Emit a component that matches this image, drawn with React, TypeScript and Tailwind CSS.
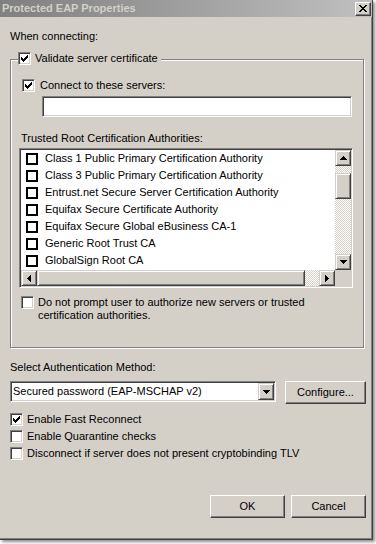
import React from 'react';

const raised =
  'border border-t-white border-l-white border-r-[#404040] border-b-[#404040] shadow-[inset_-1px_-1px_0_#808080] bg-[#d4d0c8]';
const scrollBtn =
  'border border-t-[#d4d0c8] border-l-[#d4d0c8] border-r-[#404040] border-b-[#404040] shadow-[inset_1px_1px_0_#fff,inset_-1px_-1px_0_#808080] bg-[#d4d0c8] flex items-center justify-center shrink-0';
const sunken =
  'border border-t-[#808080] border-l-[#808080] border-r-white border-b-white shadow-[inset_1px_1px_0_#404040,inset_-1px_-1px_0_#d4d0c8] bg-white';
const dither = 'bg-[repeating-conic-gradient(#fff_0_25%,#d4d0c8_0_50%)] bg-[length:2px_2px]';

const CHECK = ['......x', '.....xx', 'x...xxx', 'xx.xxx.', 'xxxxx..', '.xxx...', '..x....'];
const CLOSE = ['xx....xx', '.xx..xx.', '..xxxx..', '...xx...', '..xxxx..', '.xx..xx.', 'xx....xx'];
const UP = ['...x...', '..xxx..', '.xxxxx.', 'xxxxxxx'];
const DOWN = ['xxxxxxx', '.xxxxx.', '..xxx..', '...x...'];
const LEFT = ['...x', '..xx', '.xxx', 'xxxx', '.xxx', '..xx', '...x'];
const RIGHT = ['x...', 'xx..', 'xxx.', 'xxxx', 'xxx.', 'xx..', 'x...'];

function Pix({ rows }: { rows: string[] }) {
  const h = rows.length;
  const w = rows[0].length;
  return (
    <svg width={w} height={h} viewBox={`0 0 ${w} ${h}`} shapeRendering="crispEdges" className="block">
      {rows.flatMap((r, y) =>
        [...r].map((c, x) => (c === 'x' ? <rect key={`${x}-${y}`} x={x} y={y} width={1} height={1} fill="#000" /> : null))
      )}
    </svg>
  );
}

function CheckBox({ checked = false }: { checked?: boolean }) {
  return (
    <div className={`${sunken} w-[13px] h-[13px] shrink-0 flex items-center justify-center`}>
      {checked && <Pix rows={CHECK} />}
    </div>
  );
}

function CheckRow({ label, checked }: { label: string; checked?: boolean }) {
  return (
    <div className="flex items-center h-[13px] gap-[4px]">
      <CheckBox checked={checked} />
      <span className="leading-[13px] whitespace-nowrap">{label}</span>
    </div>
  );
}

const AUTHORITIES = [
  'Class 1 Public Primary Certification Authority',
  'Class 3 Public Primary Certification Authority',
  'Entrust.net Secure Server Certification Authority',
  'Equifax Secure Certificate Authority',
  'Equifax Secure Global eBusiness CA-1',
  'Generic Root Trust CA',
  'GlobalSign Root CA',
];

function AuthorityList() {
  return (
    <div className={`${sunken} ml-[8px] w-[334px] h-[140px] p-[1px] flex flex-col`}>
      <div className="flex h-[120px]">
        <div className="flex-1 flex flex-col overflow-hidden">
          {AUTHORITIES.map((a) => (
            <div key={a} className="h-[17px] shrink-0 flex items-center pl-[5px] gap-[7px]">
              <div className="w-[12px] h-[12px] border-2 border-black bg-white shrink-0" />
              <span className="leading-[13px] whitespace-nowrap">{a}</span>
            </div>
          ))}
        </div>
        <div className="w-[16px] flex flex-col">
          <div className={`${scrollBtn} h-[16px]`}>
            <Pix rows={UP} />
          </div>
          <div className={`${dither} h-[7px]`} />
          <div className={`${scrollBtn} h-[26px]`} />
          <div className={`${dither} flex-1`} />
          <div className={`${scrollBtn} h-[16px]`}>
            <Pix rows={DOWN} />
          </div>
        </div>
      </div>
      <div className="flex h-[16px]">
        <div className={`${scrollBtn} w-[16px]`}>
          <Pix rows={LEFT} />
        </div>
        <div className={`${scrollBtn} w-[268px]`} />
        <div className={`${dither} flex-1`} />
        <div className={`${scrollBtn} w-[16px]`}>
          <Pix rows={RIGHT} />
        </div>
        <div className="w-[16px] bg-[#d4d0c8]" />
      </div>
    </div>
  );
}

export default function App() {
  return (
    <div className="w-[376px] h-[544px] bg-white overflow-hidden font-['Liberation_Sans',Arial,sans-serif] text-[11px] text-black">
      <div className="w-[373px] h-[540px] bg-[#d4d0c8] border-r border-b border-[#404040] shadow-[inset_-1px_-1px_0_#808080,2px_2px_3px_rgba(0,0,0,0.45)] flex flex-col">
        <div className="h-[17px] shrink-0 bg-linear-to-r from-[#808080] to-[#c0c0c0] flex items-center pl-[2px] pr-[1px]">
          <span className="font-bold text-[#d4d0c8] leading-[13px] whitespace-nowrap">Protected EAP Properties</span>
          <div className={`${raised} ml-auto w-[16px] h-[14px] flex items-center justify-center`}>
            <Pix rows={CLOSE} />
          </div>
        </div>

        <div className="flex flex-col pl-[10px]">
          <div className="mt-[13px] leading-[13px]">When connecting:</div>

          <div className="relative mt-[16px] w-[354px] h-[289px] border border-[#808080] shadow-[inset_1px_1px_0_#fff,1px_1px_0_#fff] flex flex-col">
            <div className="absolute left-[7px] top-[-8px] bg-[#d4d0c8] pr-[3px]">
              <CheckRow label="Validate server certificate" checked />
            </div>

            <div className="mt-[19px] ml-[11px] flex items-center h-[13px] gap-[5px]">
              <CheckBox checked />
              <span className="leading-[13px]">Connect to these servers:</span>
            </div>
            <div className={`${sunken} mt-[4px] ml-[31px] w-[310px] h-[21px]`} />

            <div className="mt-[15px] ml-[10px] leading-[13px]">Trusted Root Certification Authorities:</div>
            <div className="mt-[3px]">
              <AuthorityList />
            </div>

            <div className="mt-[8px] ml-[10px] flex items-start gap-[4px]">
              <CheckBox />
              <span className="leading-[13px]">
                Do not prompt user to authorize new servers or trusted
                <br />
                certification authorities.
              </span>
            </div>
          </div>

          <div className="mt-[13px] leading-[13px]">Select Authentication Method:</div>

          <div className="mt-[7px] flex items-start">
            <div className={`${sunken} w-[266px] h-[21px] flex items-center pl-[2px] pr-[1px]`}>
              <span className="leading-[13px] whitespace-nowrap">Secured password (EAP-MSCHAP v2)</span>
              <div className={`${scrollBtn} ml-auto w-[16px] h-[17px]`}>
                <Pix rows={DOWN} />
              </div>
            </div>
            <button className={`${raised} ml-[9px] w-[81px] h-[23px] leading-[13px]`}>Configure...</button>
          </div>

          <div className="mt-[9px] flex flex-col gap-[4px]">
            <CheckRow label="Enable Fast Reconnect" checked />
            <CheckRow label="Enable Quarantine checks" />
            <CheckRow label="Disconnect if server does not present cryptobinding TLV" />
          </div>

          <div className="mt-[35px] ml-[200px] flex gap-[6px]">
            <button className={`${raised} w-[75px] h-[23px] leading-[13px]`}>OK</button>
            <button className={`${raised} w-[75px] h-[23px] leading-[13px]`}>Cancel</button>
          </div>
        </div>
      </div>
    </div>
  );
}
